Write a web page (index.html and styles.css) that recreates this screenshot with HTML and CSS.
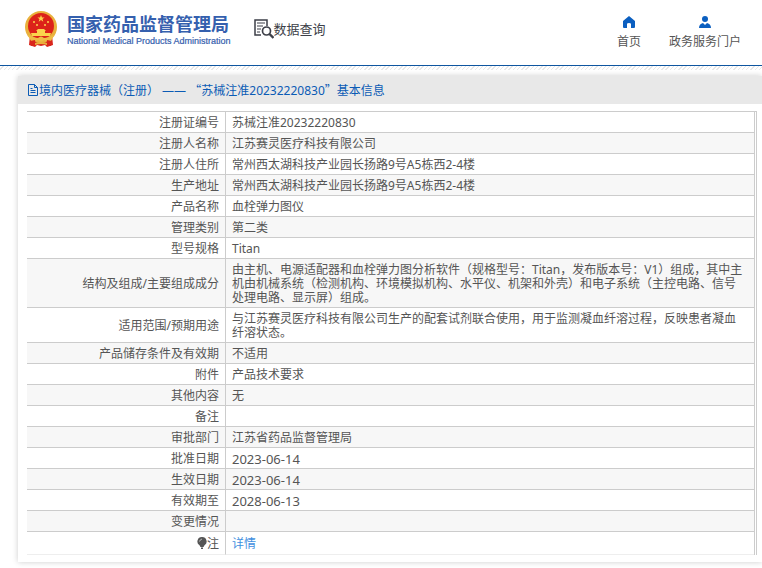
FILE: index.html
```html
<!DOCTYPE html>
<html lang="zh-CN">
<head>
  <meta charset="UTF-8">
  <meta name="viewport" content="width=device-width, initial-scale=1.0">
  <title>国家药品监督管理局--数据查询</title>
  <link rel="stylesheet" href="styles.css">
</head>
<body>
  <header class="header">
    <a class="logo" href="#">
      <svg class="emblem" viewBox="0 0 34 36" aria-hidden="true">
        <path d="M6 24 5 34l6 2 2-2 4 1 4-1 2 2 6-2-1-10z" fill="#d9261c"/>
        <circle cx="17" cy="16" r="16" fill="#e9b13c"/>
        <circle cx="17" cy="15" r="13" fill="#dc2219"/>
        <path d="m17 4 1 2.500h2.600l-2.100 1.600.8 2.600-2.300-1.600-2.300 1.600.8-2.600-2.100-1.600H16z" fill="#fbd44c"/>
        <g fill="#fbd44c">
          <circle cx="10" cy="11" r="1"/><circle cx="24" cy="11" r="1"/>
          <circle cx="13" cy="14" r="1"/><circle cx="21" cy="14" r="1"/>
          <path d="m12 20 2-2h6l2 2zM13 20h8v2h-8zM7 22h20l-1 3H8z"/>
        </g>
        <path d="M4 24q6 3 10 3 3-3 6 0 4 0 10-3l-3 6q-5 1-7-1-3 3-6 0-2 2-7 1z" fill="#efbd45"/>
        <path d="m6 30 5-1 1 5-5 1zm22 0-5-1-1 5 5 1z" fill="#d9261c"/>
        <path d="M11 32q6-2 12 0v2q-6-2-12 0z" fill="#e9b13c"/>
      </svg>
      <span class="logo-text">
        <span class="logo-cn">国家药品监督管理局</span>
        <span class="logo-en">National Medical Products Administration</span>
      </span>
    </a>
    <a class="query" href="#">
      <svg class="query-icon" viewBox="0 0 20 20" fill="none" stroke="#3d3f48" aria-hidden="true">
        <path d="M7 16H1V1h12v6" stroke-width="1.500"/>
        <path d="M3 4h8M3 7h6M3 10h4M3 13h3"/>
        <circle cx="12.500" cy="12" r="4" stroke-width="1.700"/>
        <path d="m15.500 15 4 4" stroke-width="2.400"/>
      </svg>
      <span>数据查询</span>
    </a>
    <nav class="nav">
      <a href="#">
        <svg viewBox="0 0 12 12" fill="#0b5fc0" aria-hidden="true"><path d="M6 0 0 5v6q0 1 1 1h3V8q0-1 2-1t2 1v4h3q1 0 1-1V5z"/></svg>
        <span>首页</span>
      </a>
      <a href="#">
        <svg viewBox="0 0 12 12" fill="#0b5fc0" aria-hidden="true"><circle cx="6" cy="3" r="3"/><path d="M0 12q0-4 4-5l2 2 2-2q4 1 4 5z"/></svg>
        <span>政务服务门户</span>
      </a>
    </nav>
  </header>
  <div class="hatch"></div>

  <main class="panel">
    <h1 class="panel-title">
      <svg viewBox="0 0 12 12" fill="none" stroke="#0b5bb5" aria-hidden="true"><path d="M1.500.5h6l3 3v8h-9zM7.500.5v3h3M3.500 4.500h2M3.500 6.500h5M3.500 8.500h5"/></svg>
      <span>境内医疗器械（注册） —— <span class="quote">“</span>苏械注准20232220830<span class="quote">”</span>基本信息</span>
    </h1>
    <div class="panel-body">
      <table class="info">
        <tbody>
          <tr><th scope="row">注册证编号</th><td>苏械注准20232220830</td></tr>
          <tr><th scope="row">注册人名称</th><td>江苏赛灵医疗科技有限公司</td></tr>
          <tr><th scope="row">注册人住所</th><td>常州西太湖科技产业园长扬路9号A5栋西2-4楼</td></tr>
          <tr><th scope="row">生产地址</th><td>常州西太湖科技产业园长扬路9号A5栋西2-4楼</td></tr>
          <tr><th scope="row">产品名称</th><td>血栓弹力图仪</td></tr>
          <tr><th scope="row">管理类别</th><td>第二类</td></tr>
          <tr><th scope="row">型号规格</th><td>Titan</td></tr>
          <tr><th scope="row">结构及组成/主要组成成分</th><td>由主机、电源适配器和血栓弹力图分析软件（规格型号：Titan，发布版本号：V1）组成，其中主机由机械系统（检测机构、环境模拟机构、水平仪、机架和外壳）和电子系统（主控电路、信号处理电路、显示屏）组成。</td></tr>
          <tr><th scope="row">适用范围/预期用途</th><td>与江苏赛灵医疗科技有限公司生产的配套试剂联合使用，用于监测凝血纤溶过程，反映患者凝血纤溶状态。</td></tr>
          <tr><th scope="row">产品储存条件及有效期</th><td>不适用</td></tr>
          <tr><th scope="row">附件</th><td>产品技术要求</td></tr>
          <tr><th scope="row">其他内容</th><td>无</td></tr>
          <tr><th scope="row">备注</th><td></td></tr>
          <tr><th scope="row">审批部门</th><td>江苏省药品监督管理局</td></tr>
          <tr><th scope="row">批准日期</th><td class="date">2023-06-14</td></tr>
          <tr><th scope="row">生效日期</th><td class="date">2023-06-14</td></tr>
          <tr><th scope="row">有效期至</th><td class="date">2028-06-13</td></tr>
          <tr><th scope="row">变更情况</th><td></td></tr>
          <tr class="note">
            <th scope="row"><svg viewBox="0 0 10 12" aria-hidden="true"><path d="M5 0a4.500 4.500 0 0 0-2.500 8.300L3.500 10h3l1-1.700A4.500 4.500 0 0 0 5 0zM4 10.500h2V12H4z" fill="#555"/><path d="M2.500 4.500Q3 2.500 5 2" fill="none" stroke="#bbb"/></svg>注</th>
            <td><a href="#">详情</a></td>
          </tr>
        </tbody>
      </table>
    </div>
  </main>
</body>
</html>
```
FILE: styles.css
```css
body { margin: 0; padding-bottom: 6px; background: #fff; color: #555; font-family: "Noto Sans", "Noto Sans CJK SC", sans-serif; font-size: 12px; line-height: 14px; overflow-x: hidden; }
a { color: inherit; text-decoration: none; }

/* header */
.header { display: flex; align-items: flex-start; height: 65px; border-bottom: 1px solid #0f56a0; }
.logo { display: flex; margin: 11px 0 0 24px; color: #3560ae; }
.emblem { width: 34px; height: 36px; }
.logo-text { display: flex; flex-direction: column; margin: 3px 0 0 9px; white-space: nowrap; }
.logo-cn { font-size: 18px; line-height: 20px; font-weight: bold; }
.logo-en { font-family: "Liberation Sans", Arial, sans-serif; font-size: 9px; line-height: 14px; -webkit-text-stroke: 0.2px; }
.query { display: flex; align-items: center; margin: 19px 0 0 23px; font-size: 13px; line-height: 20px; color: #3d3f48; white-space: nowrap; }
.query-icon { width: 20px; height: 20px; }
.nav { display: flex; gap: 28px; margin: 16px 21px 0 auto; }
.nav a { display: flex; flex-direction: column; align-items: center; gap: 6px; line-height: 16px; white-space: nowrap; }
.nav svg { width: 12px; height: 12px; }
.hatch { height: 4px; background: repeating-linear-gradient(135deg, #fff 0 2px, #e8e8e8 2px 3px); }

/* detail panel */
.panel { margin: 6px 0 0 18px; box-shadow: 0 0 6px rgba(0, 0, 0, 0.2); }
.panel-title { display: flex; align-items: center; height: 28px; margin: 0; padding-left: 9px; background: #e8e8e8; color: #0b5bb5; font-size: 12px; font-weight: normal; }
.panel-title svg { width: 12px; height: 12px; }
.quote { font-family: "Noto Sans CJK SC", sans-serif; }
.panel-body { padding: 7px 5px 7px 9px; }

.info { width: 100%; border-collapse: separate; border-spacing: 0; border-top: 1px solid #ccc; border-right: 3px double #ccc; }
.info th, .info td { height: 14px; padding: 4px 6px 2px; border-bottom: 1px solid #ccc; font-weight: normal; }
.info th { width: 186px; border-right: 1px solid #ccc; text-align: right; }
.info td { padding-right: 9px; text-align: left; }
.info .date { font-size: 13px; }
.info tr:nth-child(even) { background: #f7f7f7; }
.info .note th, .info .note td { padding-top: 5px; padding-bottom: 3px; border-bottom-color: #eee; }
.note svg { width: 10px; height: 12px; vertical-align: -1px; }
.note a { color: #428fe0; }
```
